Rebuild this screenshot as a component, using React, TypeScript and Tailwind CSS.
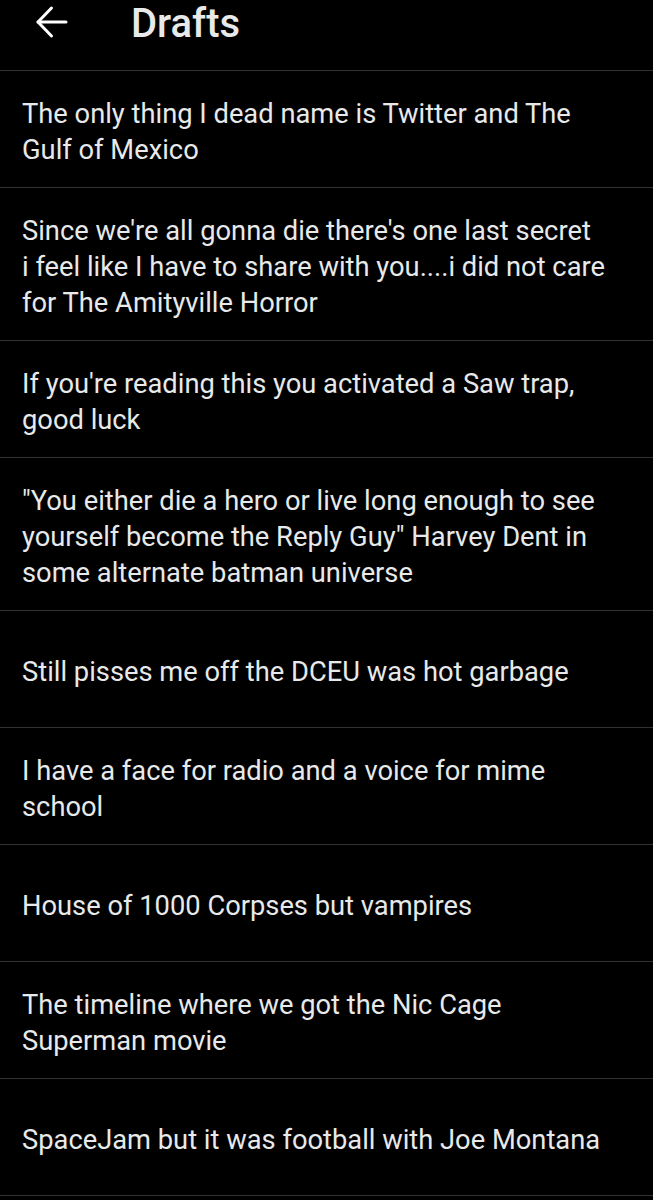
const DRAFTS: string[][] = [
  ["The only thing I dead name is Twitter and The", "Gulf of Mexico"],
  [
    "Since we're all gonna die there's one last secret",
    "i feel like I have to share with you....i did not care",
    "for The Amityville Horror",
  ],
  ["If you're reading this you activated a Saw trap,", "good luck"],
  [
    "\"You either die a hero or live long enough to see",
    "yourself become the Reply Guy\" Harvey Dent in",
    "some alternate batman universe",
  ],
  ["Still pisses me off the DCEU was hot garbage"],
  ["I have a face for radio and a voice for mime", "school"],
  ["House of 1000 Corpses but vampires"],
  ["The timeline where we got the Nic Cage", "Superman movie"],
  ["SpaceJam but it was football with Joe Montana"],
];

function BackArrow() {
  return (
    <svg width="34" height="34" viewBox="0 0 34 34" fill="none" stroke="currentColor" strokeWidth="3" strokeLinecap="round" strokeLinejoin="round">
      <path d="M31 17H3" />
      <path d="M16.5 3L3 17l13.5 14" />
    </svg>
  );
}

export default function App() {
  return (
    <div
      className="min-h-[1200px] w-[653px] bg-black text-[#e7e9ea] overflow-hidden"
      style={{ fontFamily: "Roboto, 'Noto Sans', sans-serif" }}
    >
      <header className="flex h-[71px] items-start border-b border-[#2f3336]">
        <div className="flex h-[44px] items-center pl-[35px] text-white">
          <BackArrow />
        </div>
        <h1 className="ml-[62px] pt-[4px] text-[40px] font-medium leading-[40px] text-[#e7e9ea]">
          Drafts
        </h1>
      </header>
      <ul>
        {DRAFTS.map((lines) => (
          <li
            key={lines[0]}
            className="flex min-h-[117px] items-center border-b border-[#2f3336] pl-[22px] pr-[16px] pt-[25px] pb-[19px]"
          >
            <p className="text-[27.3px] leading-[36px] whitespace-nowrap">
              {lines.map((line) => (
                <span key={line} className="block">
                  {line}
                </span>
              ))}
            </p>
          </li>
        ))}
      </ul>
    </div>
  );
}
